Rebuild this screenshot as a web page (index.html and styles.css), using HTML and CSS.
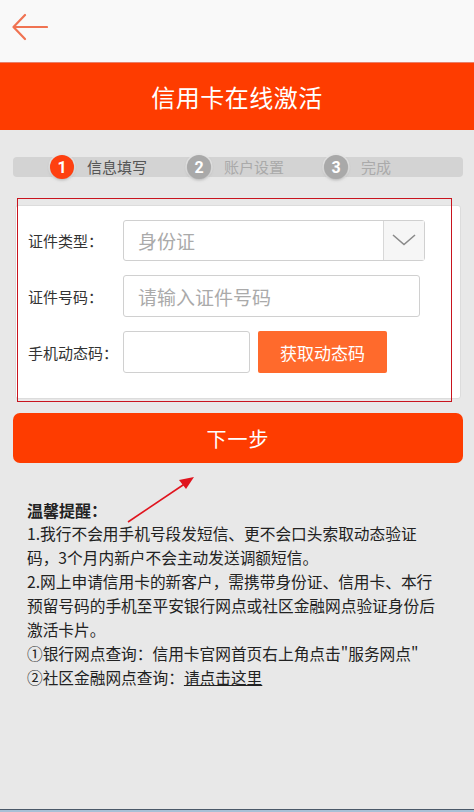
FILE: index.html
```html
<!DOCTYPE html>
<html lang="zh-CN">
<head>
<meta charset="utf-8">
<title>信用卡在线激活</title>
<link rel="stylesheet" href="styles.css">
</head>
<body>
<div class="page">
  <div class="topbar">
    <svg class="back" width="36" height="28" viewBox="0 0 36 28">
      <path d="M35 14H2M13 2L1.5 14L13 26" fill="none" stroke="#f07352" stroke-width="2.2" stroke-linecap="round" stroke-linejoin="round"/>
    </svg>
  </div>
  <div class="header">信用卡在线激活</div>

  <div class="steps">
    <div class="step active"><span class="num">1</span><span class="label">信息填写</span></div>
    <div class="step"><span class="num">2</span><span class="label">账户设置</span></div>
    <div class="step"><span class="num">3</span><span class="label">完成</span></div>
  </div>

  <div class="card">
    <div class="row">
      <span class="lbl">证件类型<span class="cp">：</span></span>
      <div class="select">
        <span class="value">身份证</span>
        <span class="drop">
          <svg width="24" height="12" viewBox="0 0 24 12"><path d="M1 1L12 10.5L23 1" fill="none" stroke="#8a8a8a" stroke-width="1.6"/></svg>
        </span>
      </div>
    </div>
    <div class="row">
      <span class="lbl">证件号码<span class="cp">：</span></span>
      <div class="input wide"><span class="ph">请输入证件号码</span></div>
    </div>
    <div class="row">
      <span class="lbl">手机动态码<span class="cp">：</span></span>
      <div class="input short"></div>
      <div class="code-btn">获取动态码</div>
    </div>
  </div>

  <div class="next-btn">下一步</div>

  <div class="tips">
    <div class="tips-title">温馨提醒<span class="cp">：</span></div>
    <p>1.我行不会用手机号段发短信、更不会口头索取动态验证码，3个月内新户不会主动发送调额短信。</p>
    <p>2.网上申请信用卡的新客户，需携带身份证、信用卡、本行预留号码的手机至平安银行网点或社区金融网点验证身份后激活卡片。</p>
    <p>①银行网点查询<span class="cp">：</span>信用卡官网首页右上角点击"服务网点"</p>
    <p>②社区金融网点查询<span class="cp">：</span><span class="link">请点击这里</span></p>
  </div>

  <div class="spacer"></div>
  <div class="bottom-strip"></div>

  <div class="annot-box"></div>
  <svg class="annot-arrow" width="80" height="56" viewBox="0 0 80 56">
    <path d="M4 51L62 12" stroke="#e0141e" stroke-width="1.6" fill="none"/>
    <path d="M70 6L55 9L62 18Z" fill="#e0141e"/>
  </svg>
</div>
</body>
</html>
```

FILE: styles.css
```css
html, body {
  margin: 0;
  padding: 0;
}
body {
  background: #e8e8e8;
  font-family: "Noto Sans CJK SC", "Noto Sans", sans-serif;
  color: #222;
}
.page {
  position: relative;
  width: 474px;
  height: 812px;
  display: flex;
  flex-direction: column;
  overflow: hidden;
}
.topbar {
  height: 62px;
  background: #f9f9f9;
  flex: none;
  display: flex;
  align-items: center;
  padding-left: 12px;
}
.back {
  display: block;
  margin-top: -8px;
}
.header {
  flex: none;
  height: 67px;
  border-top: 1px solid #e8806a;
  background: #fe3c00;
  color: #fff;
  font-size: 24px;
  display: flex;
  align-items: center;
  justify-content: center;
  letter-spacing: 0.5px;
}
.steps {
  flex: none;
  margin: 27px 11px 0 13px;
  height: 20px;
  background: #d3d3d3;
  border-radius: 4px;
  display: flex;
  align-items: center;
  padding-left: 37px;
}
.step {
  width: 137px;
  display: flex;
  align-items: center;
  flex: none;
}
.num {
  width: 24px;
  height: 24px;
  border-radius: 50%;
  background: #a9a9a9;
  color: #fff;
  font-family: "Roboto", "Noto Sans", sans-serif;
  font-weight: bold;
  font-size: 16px;
  display: flex;
  align-items: center;
  justify-content: center;
  box-shadow: 0 1px 3px rgba(120, 120, 120, 0.5), 0 0 0 1.5px rgba(235, 235, 235, 0.9);
  flex: none;
}
.step.active .num {
  background: #fe4010;
}
.label {
  margin-left: 13px;
  font-size: 15px;
  color: #aaa;
  line-height: 20px;
}
.step.active .label {
  color: #555;
}
.cp {
  font-family: "Noto Sans CJK TC", "Noto Sans CJK SC", sans-serif;
}
.card {
  flex: none;
  margin: 28px 13px 0 15px;
  background: #fff;
  border: 1px solid #dcdcdc;
  border-radius: 3px;
  height: 194px;
  padding: 13px 0 0 12px;
  box-sizing: border-box;
  display: flex;
  flex-direction: column;
  gap: 14px;
}
.row {
  display: flex;
  align-items: center;
  height: 42px;
  flex: none;
}
.lbl {
  width: 95px;
  flex: none;
  font-size: 15px;
  color: #333;
}
.select {
  width: 302px;
  height: 41px;
  box-sizing: border-box;
  border: 1px solid #d0d0d0;
  border-radius: 3px;
  display: flex;
  align-items: stretch;
}
.value, .ph {
  font-size: 19px;
  color: #aaa;
  padding-left: 14px;
  display: flex;
  align-items: center;
}
.value {
  flex: 1;
}
.drop {
  width: 40px;
  border-left: 1px solid #d8d8d8;
  background: #f6f6f6;
  display: flex;
  align-items: center;
  justify-content: center;
}
.input {
  height: 42px;
  box-sizing: border-box;
  border: 1px solid #d0d0d0;
  border-radius: 3px;
  display: flex;
  align-items: center;
}
.input.wide {
  width: 297px;
}
.input.short {
  width: 127px;
}
.code-btn {
  margin-left: 8px;
  width: 129px;
  height: 42px;
  background: #ff6a2c;
  border-radius: 2px;
  color: #fff;
  font-size: 17px;
  display: flex;
  align-items: center;
  justify-content: center;
}
.next-btn {
  flex: none;
  margin: 14px 11px 0 13px;
  height: 50px;
  border-radius: 7px;
  background: #fe3c00;
  color: #fff;
  font-size: 20px;
  display: flex;
  align-items: center;
  justify-content: center;
  letter-spacing: 1px;
}
.tips {
  flex: none;
  margin: 35px 0 0 27px;
  width: 414px;
  font-size: 15.7px;
  line-height: 24px;
  color: #222;
}
.tips-title {
  font-weight: bold;
  font-size: 16px;
}
.tips p {
  margin: 0;
}
.link {
  text-decoration: underline;
}
.spacer {
  flex: 1;
}
.bottom-strip {
  flex: none;
  height: 2px;
  border-top: 1px solid #4a5868;
  background: #a9c0d6;
}
.annot-box {
  position: absolute;
  left: 17px;
  top: 198px;
  width: 433px;
  height: 202px;
  border: 1px solid #c8141e;
}
.annot-arrow {
  position: absolute;
  left: 124px;
  top: 471px;
}
```
